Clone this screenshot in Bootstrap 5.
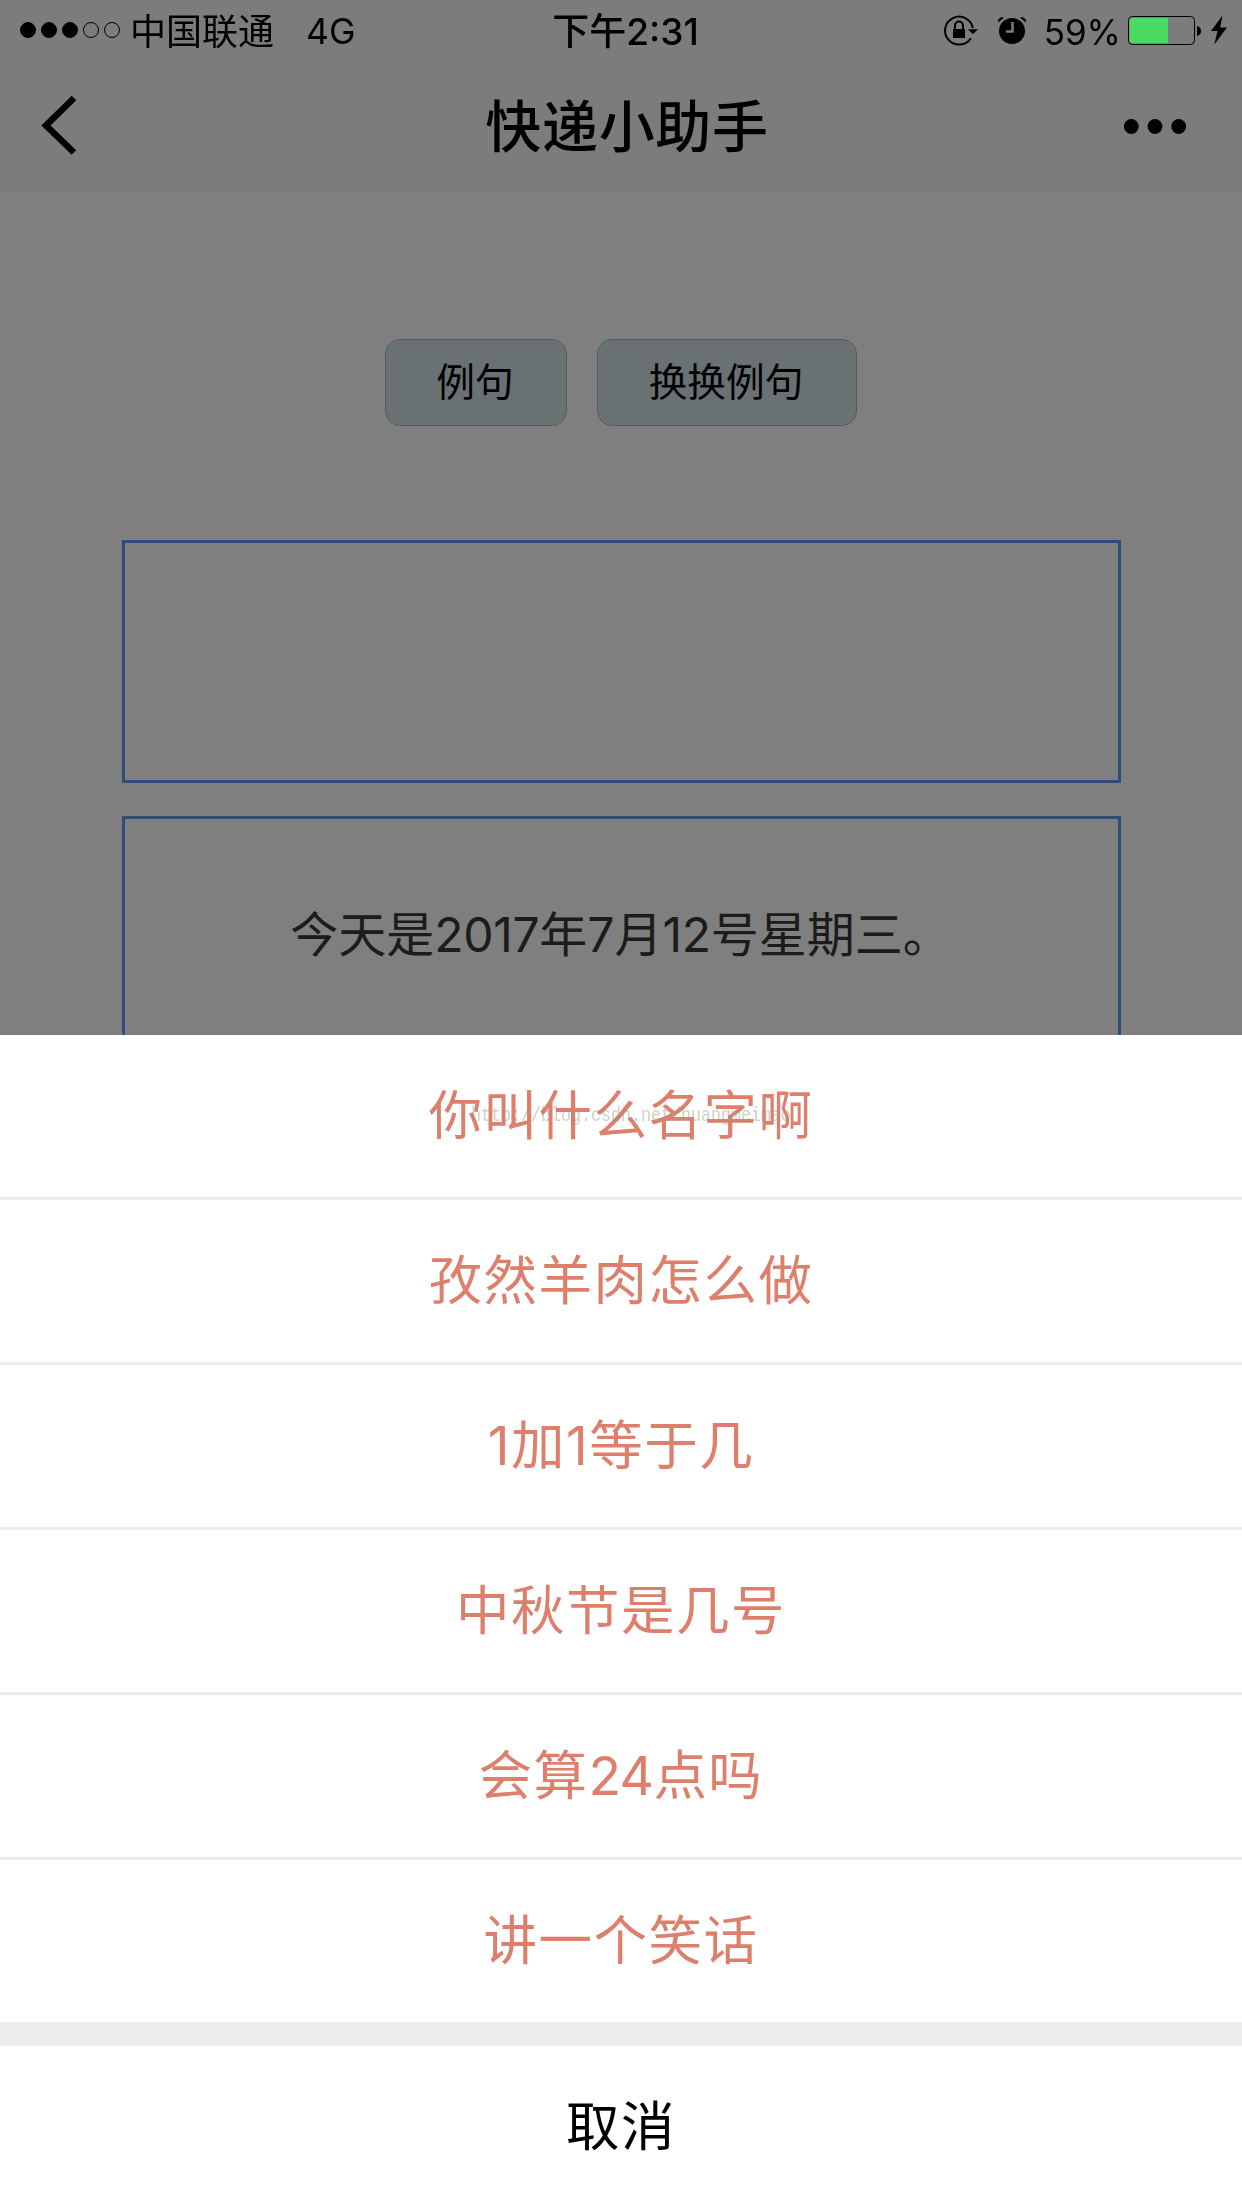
<!DOCTYPE html>
<html lang="zh-CN">
<head>
<meta charset="utf-8">
<meta name="viewport" content="width=device-width, initial-scale=1">
<title>快递小助手</title>
<link href="https://cdn.jsdelivr.net/npm/bootstrap@5.3.0/dist/css/bootstrap.min.css" rel="stylesheet">
<style>
body{font-family:Inter,"Noto Sans CJK SC",sans-serif;color:#000;background:#fff;height:2208px;overflow:hidden}
.app-head{height:192px;background:#f8f8f8}
.status-bar{height:60px;z-index:3;font-size:36px;line-height:60px;color:#000}
.status-bar span{padding-top:3px}
.clock{padding-top:2px}
.status-side{width:500px}
.carrier{margin-left:8px}
.network{margin-left:32px;font-size:35.5px}
.clock{font-weight:500;margin-left:9px;font-size:37px}
.percent{font-size:35px;font-weight:400;margin:0 7px 0 14px}
.title-bar{height:132px}
.title-text{font-size:56px;font-weight:500;letter-spacing:.7px;line-height:132px;padding-top:2px}
.sample-row{padding-top:147px;gap:30px}
.sample-btn{height:87px;padding:0 2px 1px 0;font-size:38.7px;line-height:1;color:#000;background:#d2e3e5;border:1px solid #a9b7b9;border-radius:15px}
.sample-btn.narrow{width:182px}
.sample-btn.wide{width:260px}
.talk-area{width:999px;margin:114px 0 0 122px;gap:33px}
.talk-box{height:243px;border:3px solid #6098f3;color:#383838;font-size:48px}
.talk-box p{margin:0 2px 6px 0}
.talk-box p span{letter-spacing:-.3px}
.shade{background:rgba(0,0,0,.5);z-index:2}
.action-sheet{z-index:4;background:#ececec}
.action-sheet .list-group-item{height:165px;padding:0;border:0;border-bottom:3px solid #ececec;background:#fff;color:#de7f6b;font-size:53.5px;line-height:162px;letter-spacing:1.5px}
.action-sheet .list-group-item:last-child{height:162px;border-bottom:0}
.action-sheet .list-group-item span{letter-spacing:-.8px}
.cancel-btn{height:162px;margin-top:24px;font-size:53.5px;letter-spacing:1.5px;line-height:162px;background:#fff;border:0;color:#000;padding:0}
.source-mark{left:471px;top:1102px;z-index:5;font:16.67px/28px "Liberation Mono",monospace;color:rgba(150,150,130,.45);transform:scaleY(1.2)}
</style>
<script src="https://cdn.jsdelivr.net/npm/bootstrap@5.3.0/dist/js/bootstrap.bundle.min.js"></script>
</head>
<body class="position-relative">
<header class="app-head">
  <div class="status-bar position-relative d-flex justify-content-between">
    <div class="status-side d-flex align-items-center">
      <svg width="122" height="60" viewBox="0 0 122 60"><g stroke="#000"><circle cx="28" cy="30" r="7.5"/><circle cx="49" cy="30" r="7.5"/><circle cx="70" cy="30" r="7.5"/><circle cx="91" cy="30" r="7.5" fill="none"/><circle cx="112" cy="30" r="7.5" fill="none"/></g></svg>
      <span class="carrier">中国联通</span><span class="network">4G</span>
    </div>
    <div class="clock">下午2:31</div>
    <div class="status-side d-flex align-items-center justify-content-end">
      <svg width="90" height="60" viewBox="940 0 90 60">
        <path d="M970.8 38.2A14 14 0 1 1 972.8 28" fill="none" stroke="#000" stroke-width="2"/>
        <path d="M968 29.3h10l-5 5z"/>
        <path d="M953 29h12v9h-12z"/><path d="M955 30v-4.500a4 4 0 0 1 8 0V30" fill="none" stroke="#000" stroke-width="2"/>
        <circle cx="1012" cy="31" r="13"/><path d="M1012.500 22v9.500h-6.500" fill="none" stroke="#7c7c7c" stroke-width="2.600"/>
        <path d="M998 22.500q-.5-5 5-5.500 1 .3 0 1.500zM1026 22.500q.5-5-5-5.500-1 .3 0 1.500z"/>
      </svg>
      <span class="percent">59%</span>
      <svg width="114" height="60" viewBox="1128 0 114 60">
        <rect x="1128.500" y="16.500" width="66" height="28" rx="4" fill="none" stroke="#000"/>
        <path d="M1132 18h36v25h-36q-2.500 0-2.500-2.500v-20q0-2.500 2.500-2.500z" fill="#4cd964"/>
        <path d="M1197 26q4 1 4 5t-4 5z"/>
        <path d="M1222.500 15.500l-11.500 15.500h6.500l-3.200 13.500L1227 27.500h-6.800z"/>
      </svg>
    </div>
  </div>
  <nav class="title-bar d-flex align-items-center justify-content-between">
    <svg width="120" height="132" viewBox="0 60 120 132"><path d="M74 98L46 125.500L74 152.500" fill="none" stroke="#000" stroke-width="6.500"/></svg>
    <span class="title-text ps-2 ms-1">快递小助手</span>
    <svg width="120" height="132" viewBox="1122 60 120 132"><circle cx="1131.300" cy="126.500" r="7.400"/><circle cx="1155" cy="126.500" r="7.400"/><circle cx="1178.700" cy="126.500" r="7.400"/></svg>
  </nav>
</header>
<main>
  <div class="sample-row d-flex justify-content-center">
    <button class="btn sample-btn narrow">例句</button>
    <button class="btn sample-btn wide">换换例句</button>
  </div>
  <div class="talk-area d-flex flex-column">
    <div class="talk-box"></div>
    <div class="talk-box d-flex align-items-center justify-content-center"><p>今天是<span>2017</span>年7月<span>12</span>号星期三。</p></div>
  </div>
</main>
<div class="shade position-fixed top-0 start-0 w-100 h-100"></div>
<section class="action-sheet position-fixed bottom-0 start-0 w-100 text-center">
  <div class="list-group list-group-flush">
    <button class="list-group-item text-center">你叫什么名字啊</button>
    <button class="list-group-item text-center">孜然羊肉怎么做</button>
    <button class="list-group-item text-center">1加1等于几</button>
    <button class="list-group-item text-center">中秋节是几号</button>
    <button class="list-group-item text-center">会算<span>24</span>点吗</button>
    <button class="list-group-item text-center">讲一个笑话</button>
  </div>
  <button class="cancel-btn d-block w-100">取消</button>
</section>
<div class="source-mark position-fixed">http://blog.csdn.net/huangmeimao</div>
</body>
</html>
